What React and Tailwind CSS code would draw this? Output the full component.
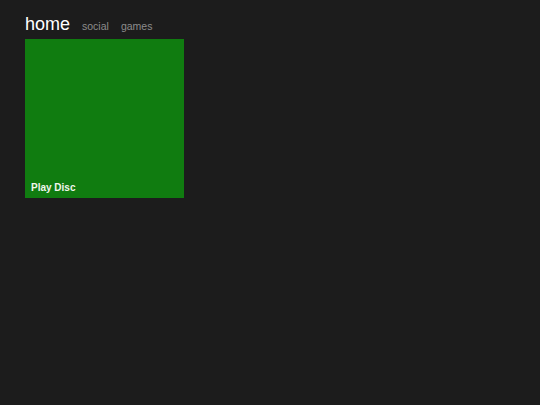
export default function App() {
  const tabs = ['social', 'games'];

  return (
    <div className="min-h-[405px] w-full bg-[#1c1c1c] px-[25px] pt-[15px] font-['Liberation_Sans',Arial,sans-serif]">
      <div className="flex items-baseline gap-[12px] mb-[4px]">
        <h1 className="text-[18px] leading-[18px] text-white">home</h1>
        {tabs.map((t) => (
          <span key={t} className="text-[10.5px] leading-[18px] text-[#8c8c8c]">
            {t}
          </span>
        ))}
      </div>

      <div className="flex h-[159px] w-[159px] items-end bg-[#107c10] px-[6px] pb-[4px]">
        <span className="text-[10px] font-bold leading-[12px] text-[#f0f6ec]">Play Disc</span>
      </div>
    </div>
  );
}
